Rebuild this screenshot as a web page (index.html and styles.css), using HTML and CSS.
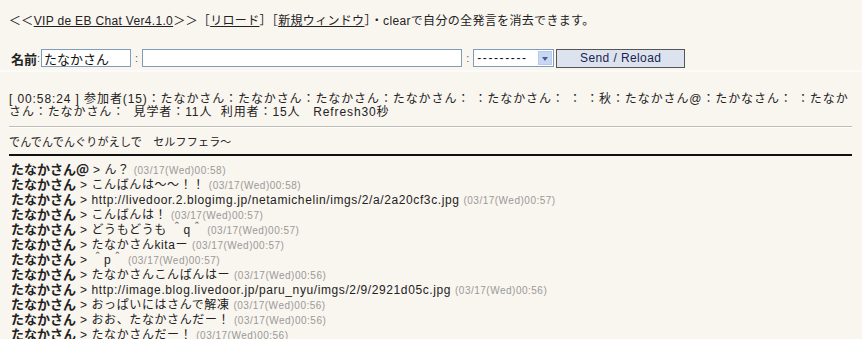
FILE: index.html
```html
<!DOCTYPE html>
<html lang="ja">
<head>
  <meta charset="UTF-8" />
  <title>VIP de EB Chat</title>
  <link rel="stylesheet" href="styles.css">
</head>
<body>
  <div class="top">
    <p class="nav">＜＜<a href="#">VIP de EB Chat Ver4.1.0</a>＞＞［<a href="#">リロード</a>］［<a href="#">新規ウィンドウ</a>］・clearで自分の全発言を消去できます。</p>
    <form class="post">
      <label for="name">名前</label><span class="sep">:</span><input type="text" id="name" class="name" value="たなかさん" />
      <span class="sep wide">:</span><input type="text" id="msg" class="msg" />
      <span class="sep wide">:</span>
      <div class="select"><span>---------</span><i></i></div>
      <button type="button">Send / Reload</button>
    </form>
  </div>

  <div class="log">
    <p class="members">[ 00:58:24 ] 参加者(15)：たなかさん：たなかさん：たなかさん：たなかさん： ：たなかさん： ： ：秋：たなかさん@：たかなさん： ：たなか<br>さん：たなかさん：  見学者：11人  利用者：15人   Refresh30秒</p>
    <hr class="thin">
    <p class="topic">でんでんでんぐりがえしで　セルフフェラ〜</p>
    <hr class="thick">
    <ul class="msgs">
      <li><b>たなかさん@</b> &gt; ん？ <small>(03/17(Wed)00:58)</small></li>
      <li><b>たなかさん</b> &gt; こんばんは〜〜！！ <small>(03/17(Wed)00:58)</small></li>
      <li><b>たなかさん</b> &gt; http://livedoor.2.blogimg.jp/netamichelin/imgs/2/a/2a20cf3c.jpg <small>(03/17(Wed)00:57)</small></li>
      <li><b>たなかさん</b> &gt; こんばんは！ <small>(03/17(Wed)00:57)</small></li>
      <li><b>たなかさん</b> &gt; どうもどうも ＾q＾ <small>(03/17(Wed)00:57)</small></li>
      <li><b>たなかさん</b> &gt; たなかさんkitaー <small>(03/17(Wed)00:57)</small></li>
      <li><b>たなかさん</b> &gt; ＾p＾ <small>(03/17(Wed)00:57)</small></li>
      <li><b>たなかさん</b> &gt; たなかさんこんばんはー <small>(03/17(Wed)00:56)</small></li>
      <li><b>たなかさん</b> &gt; http://image.blog.livedoor.jp/paru_nyu/imgs/2/9/2921d05c.jpg <small>(03/17(Wed)00:56)</small></li>
      <li><b>たなかさん</b> &gt; おっぱいにはさんで解凍 <small>(03/17(Wed)00:56)</small></li>
      <li><b>たなかさん</b> &gt; おお、たなかさんだー！ <small>(03/17(Wed)00:56)</small></li>
      <li><b>たなかさん</b> &gt; たなかさんだー！ <small>(03/17(Wed)00:56)</small></li>
    </ul>
  </div>
</body>
</html>
```

FILE: styles.css
```css
body {
  margin: 0;
  background-color: #f9f5ef;
  color: #222;
  font-family: "Liberation Sans", "Noto Sans CJK JP", sans-serif;
  font-size: 12px;
  overflow: hidden;
}
p {
  margin: 0;
}
a {
  color: #222;
}
.top {
  padding: 13px 9px 3px;
  border-bottom: 2px solid #fdfbf8;
}
.nav {
  line-height: 16px;
  letter-spacing: 0.33px;
}
.post {
  display: flex;
  align-items: center;
  margin-top: 20px;
  height: 18px;
}
.post label {
  font-weight: bold;
  font-size: 13px;
  padding-left: 2px;
}
.sep {
  font-size: 11px;
  color: #555;
  padding: 0 1px 0 0;
}
.sep.wide {
  padding: 0 4px 0 4px;
}
input {
  box-sizing: border-box;
  height: 18px;
  border: 1px solid #7f9db9;
  background: #fff;
  padding: 0 2px;
  font-family: "Noto Sans CJK JP", sans-serif;
  font-size: 13px;
  color: #111;
}
.name {
  width: 90px;
}
.msg {
  width: 320px;
}
.select {
  box-sizing: border-box;
  width: 81px;
  height: 18px;
  border: 1px solid #7f9db9;
  background: #fff;
  display: flex;
  align-items: center;
  justify-content: space-between;
  padding-left: 3px;
  font-size: 12px;
  letter-spacing: 1.6px;
  color: #111;
}
.select i {
  width: 14px;
  height: 14px;
  margin-right: 1px;
  background: #c8d8f4;
  border: 1px solid #b9cbec;
  box-sizing: border-box;
  position: relative;
}
.select i::after {
  content: "";
  position: absolute;
  left: 3px;
  top: 5px;
  border-left: 3.5px solid transparent;
  border-right: 3.5px solid transparent;
  border-top: 4px solid #4d6185;
}
button {
  margin-left: 2px;
  width: 129px;
  height: 19px;
  border: 1px solid #555;
  background: #dde3ee;
  color: #1a2350;
  font-family: "Liberation Sans", sans-serif;
  font-size: 12px;
  letter-spacing: 0.4px;
  padding: 0;
}
.log {
  padding: 0 10px 0 9px;
}
.members {
  margin-top: 21px;
  line-height: 13px;
  white-space: pre;
  letter-spacing: 0.9px;
}
hr {
  border: none;
  margin: 0;
}
hr.thin {
  margin-top: 7px;
  height: 1px;
  background: #c0bcb6;
  border-bottom: 1px solid #fff;
}
.topic {
  margin-top: 7px;
  line-height: 14px;
  font-size: 11px;
  letter-spacing: 0.2px;
}
hr.thick {
  margin-top: 5px;
  height: 2px;
  background: #111;
}
.msgs {
  list-style: none;
  margin: 6px 0 0;
  padding: 0 0 0 2px;
}
.msgs li {
  height: 15px;
  line-height: 15px;
  white-space: nowrap;
  letter-spacing: 0.6px;
}
.msgs b {
  font-size: 13px;
  line-height: 1;
  letter-spacing: 0;
  font-family: "Noto Sans CJK JP", sans-serif;
}
.msgs small {
  font-size: 10px;
  letter-spacing: 0.5px;
  color: #999;
}
```
